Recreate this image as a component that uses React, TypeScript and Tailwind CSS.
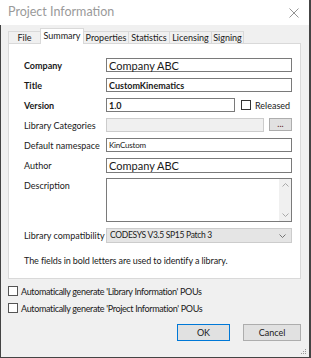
import React from 'react';

const font = { fontFamily: 'Lato, "Noto Sans", sans-serif' };

function Check({ className = '' }: { className?: string }) {
	return <span className={`block h-[10px] w-[10px] shrink-0 border border-[#333] bg-white ${className}`} />;
}

function Tab({ label, active = false, w }: { label: string; active?: boolean; w: string }) {
	if (active) {
		return (
			<div className={`relative z-10 -mb-px -ml-px flex h-[16px] items-start justify-center border border-b-0 border-[#d9d9d9] bg-white pt-[2px] ${w}`}>
				{label}
			</div>
		);
	}
	return (
		<div className={`-ml-px flex h-[12px] items-center justify-center border border-b-0 border-[#d9d9d9] bg-[#f0f0f0] ${w}`}>
			{label}
		</div>
	);
}

function Row({ label, bold = false, children, h = 'h-[14px]' }: { label: string; bold?: boolean; children: React.ReactNode; h?: string }) {
	return (
		<div className={`mb-[6px] flex items-start ${h}`}>
			<div className={`flex h-[14px] w-[82px] shrink-0 items-center ${bold ? 'font-bold' : ''}`}>{label}</div>
			{children}
		</div>
	);
}

export default function App() {
	return (
		<div className="h-[358px] w-[311px] overflow-hidden whitespace-nowrap bg-white text-[9px] leading-none text-[#1a1a1a]" style={font}>
			<div className="flex h-[25px] items-center justify-between border-r-2 border-[#444] bg-white pl-[8px] pr-[8px]">
				<span className="text-[12.5px] text-[#9a9a9a]">Project Information</span>
				<svg width="10" height="10" viewBox="0 0 10 10" className="mr-[2px]">
					<path d="M0.5 0.5 L9.5 9.5 M9.5 0.5 L0.5 9.5" stroke="#888" strokeWidth="0.9" />
				</svg>
			</div>
			<div className="relative flex h-[333px] flex-col border-b border-l border-r-2 border-[#444] bg-[#f0f0f0]">
				<div className="mt-[3px] flex h-[15px] items-end pl-[8px]">
					<Tab label="File" w="w-[33px]" />
					<Tab label="Summary" active w="w-[44px]" />
					<Tab label="Properties" w="w-[46px]" />
					<Tab label="Statistics" w="w-[42px]" />
					<Tab label="Licensing" w="w-[43px]" />
					<Tab label="Signing" w="w-[33px]" />
				</div>
				<div className="ml-[7px] w-[293px] border border-[#d9d9d9] bg-white pb-[12px] pl-[15px] pr-[8px] pt-[14px]">
					<Row label="Company" bold>
						<div className="flex h-[14px] flex-1 items-center border border-[#7a7a7a] pl-[2px] text-[11px]">Company ABC</div>
					</Row>
					<Row label="Title" bold>
						<div className="flex h-[14px] flex-1 items-center border border-[#7a7a7a] pl-[2px] font-bold">CustomKinematics</div>
					</Row>
					<Row label="Version" bold>
						<div className="flex h-[14px] w-[129px] items-center border border-[#7a7a7a] pl-[2px] font-bold">1.0</div>
						<div className="ml-[6px] flex h-[14px] items-center gap-[4px]">
							<Check />
							<span>Released</span>
						</div>
					</Row>
					<Row label="Library Categories">
						<div className="h-[14px] w-[158px] border border-[#cccccc] bg-[#f0f0f0]" />
						<div className="ml-[5px] flex h-[13px] flex-1 items-center justify-center border border-[#adadad] bg-[#e1e1e1] pb-[3px] text-[#5a1a1a]">...</div>
					</Row>
					<Row label="Default namespace">
						<div className="flex h-[14px] flex-1 items-center border border-[#7a7a7a] pl-[2px] text-[8px] tracking-[-0.2px]">KinCustom</div>
					</Row>
					<Row label="Author">
						<div className="flex h-[15px] flex-1 items-center border border-[#7a7a7a] pl-[2px] text-[11px]">Company ABC</div>
					</Row>
					<Row label="Description" h="h-[44px]">
						<div className="flex h-[44px] flex-1 justify-end border border-[#7a7a7a]">
							<div className="flex w-[12px] flex-col items-center justify-between bg-[#f0f0f0] py-[4px]">
								<svg width="7" height="4" viewBox="0 0 7 4">
									<path d="M0.5 3.5 L3.5 0.5 L6.5 3.5" stroke="#a0a0a0" fill="none" strokeWidth="0.9" />
								</svg>
								<svg width="7" height="4" viewBox="0 0 7 4">
									<path d="M0.5 0.5 L3.5 3.5 L6.5 0.5" stroke="#a0a0a0" fill="none" strokeWidth="0.9" />
								</svg>
							</div>
						</div>
					</Row>
					<div className="flex h-[15px] items-center">
						<div className="w-[82px] shrink-0">Library compatibility</div>
						<div className="flex h-[15px] flex-1 items-center justify-between border border-[#cccccc] bg-[#e5e5e5] pl-[3px] pr-[5px]">
							<span className="text-[8.5px] tracking-[-0.3px]">CODESYS V3.5 SP15 Patch 3</span>
							<svg width="7" height="4" viewBox="0 0 7 4">
								<path d="M0.5 0.5 L3.5 3.5 L6.5 0.5" stroke="#666" fill="none" strokeWidth="0.9" />
							</svg>
						</div>
					</div>
					<div className="mt-[11px] flex h-[12px] items-center tracking-[-0.1px]">The fields in bold letters are used to identify a library.</div>
				</div>
				<div className="mt-[7px] flex h-[10px] items-center gap-[3px] pl-[7px]">
					<Check className="border-[#555]" />
					<span className="tracking-[-0.35px]">Automatically generate 'Library Information' POUs</span>
				</div>
				<div className="mt-[7px] flex h-[10px] items-center gap-[3px] pl-[7px]">
					<Check className="border-[#555]" />
					<span className="tracking-[-0.35px]">Automatically generate 'Project Information' POUs</span>
				</div>
				<div className="mt-[11px] flex justify-end gap-[13px] pr-[8px]">
					<button className="flex h-[17px] w-[53px] items-center justify-center border border-[#0078d7] bg-[#e1e1e1]">OK</button>
					<button className="flex h-[17px] w-[58px] items-center justify-center border border-[#adadad] bg-[#e1e1e1]">Cancel</button>
				</div>
				<svg width="6" height="6" viewBox="0 0 6 6" className="absolute bottom-[2px] right-[2px]">
					<rect x="4" y="0" width="1" height="1" fill="#999" />
					<rect x="2" y="2" width="1" height="1" fill="#999" />
					<rect x="4" y="2" width="1" height="1" fill="#999" />
					<rect x="0" y="4" width="1" height="1" fill="#999" />
					<rect x="2" y="4" width="1" height="1" fill="#999" />
					<rect x="4" y="4" width="1" height="1" fill="#999" />
				</svg>
			</div>
		</div>
	);
}
